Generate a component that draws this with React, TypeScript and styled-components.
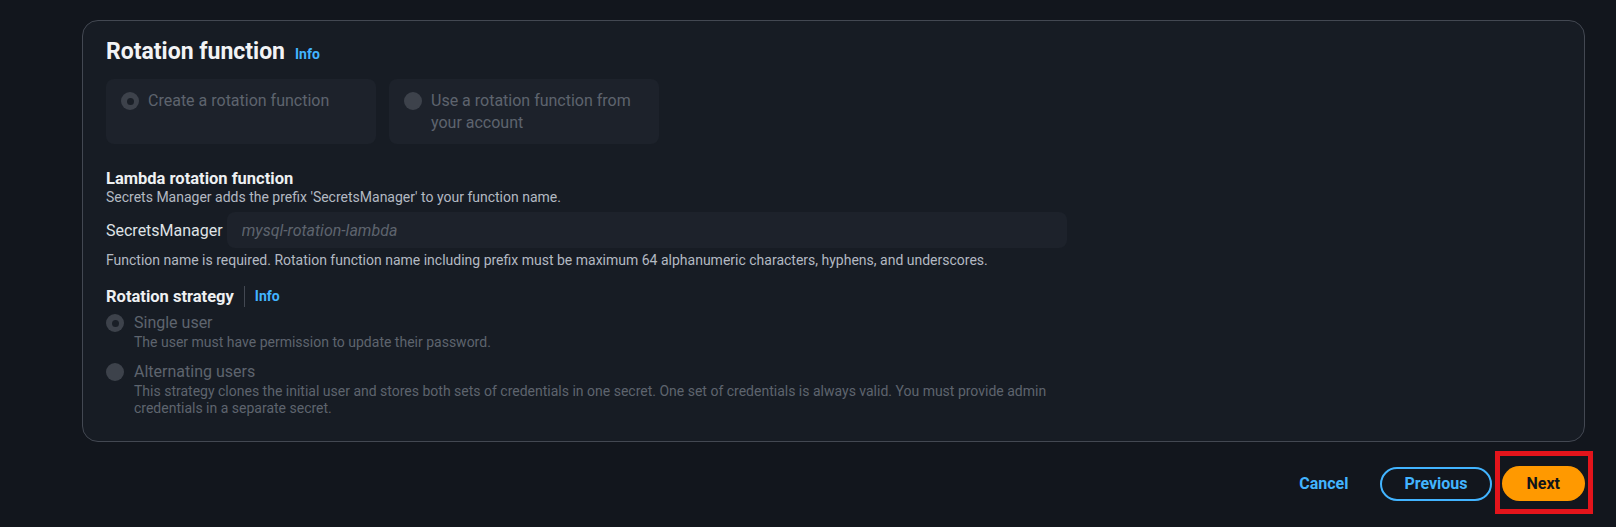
import styled, { createGlobalStyle } from 'styled-components';

const GlobalStyle = createGlobalStyle`
    html, body {
        margin: 0;
        padding: 0;
        background: #12161d;
    }

    body {
        font-family: Roboto, "Liberation Sans", sans-serif;
        color: #e9ebed;
        -webkit-font-smoothing: antialiased;
    }
`;

const StyledPage = styled.div`
    display: flex;
    flex-direction: column;
    gap: 24px;
    padding: 20px 31px 0 82px;
    min-height: 527px;
    box-sizing: border-box;
`;

const StyledCard = styled.section`
    background: #171c24;
    border: 1px solid #434852;
    border-radius: 16px;
    padding: 17px 23px 24px;
`;

const StyledHeader = styled.div`
    display: flex;
    align-items: baseline;
    gap: 10px;
`;

const StyledTitle = styled.h2`
    margin: 0;
    font-size: 23px;
    line-height: 28px;
    font-weight: 700;
    color: #f2f3f5;
`;

const StyledInfo = styled.a<{ $divided?: boolean }>`
    font-size: 14px;
    font-weight: 700;
    color: #42b4ff;
    text-decoration: none;
    padding-left: ${p => (p.$divided ? '10px' : '0')};
    border-left: ${p => (p.$divided ? '1px solid #434852' : 'none')};
    line-height: 21px;
`;

const StyledTiles = styled.div`
    display: grid;
    grid-template-columns: repeat(2, 270px);
    gap: 13px;
    margin-top: 13px;
`;

const StyledTile = styled.div`
    display: flex;
    gap: 9px;
    height: 65px;
    box-sizing: border-box;
    padding: 11px 15px;
    background: #1d222b;
    border-radius: 8px;
`;

const StyledRadio = styled.span<{ $checked?: boolean; $offset?: number }>`
    flex: none;
    width: 18px;
    height: 18px;
    margin-top: ${p => p.$offset ?? 2}px;
    border-radius: 50%;
    background: #3d424b;
    display: flex;
    align-items: center;
    justify-content: center;

    &::after {
        content: '';
        display: ${p => (p.$checked ? 'block' : 'none')};
        width: 7px;
        height: 7px;
        border-radius: 50%;
        background: #1a1f27;
    }
`;

const StyledDisabledLabel = styled.span`
    font-size: 16px;
    line-height: 22px;
    color: #5e646e;
`;

const StyledField = styled.div`
    display: flex;
    flex-direction: column;
    max-width: 961px;
`;

const StyledFieldLabel = styled.div`
    display: flex;
    align-items: center;
    gap: 10px;
    font-size: 16.5px;
    line-height: 21px;
    font-weight: 700;
    color: #eef0f2;
`;

const StyledDescription = styled.div<{ $muted?: boolean }>`
    font-size: 14px;
    line-height: 17px;
    color: ${p => (p.$muted ? '#5e646e' : '#b3b9c2')};
`;

const StyledInputRow = styled.div`
    display: flex;
    align-items: center;
    gap: 4px;
    margin: 6px 0 4px;
`;

const StyledPrefix = styled.span`
    font-size: 16px;
    color: #dfe2e6;
`;

const StyledInput = styled.input`
    flex: 1;
    height: 36px;
    box-sizing: border-box;
    border: none;
    border-radius: 8px;
    background: #1d222b;
    padding: 0 15px;
    font-family: inherit;
    font-size: 16px;
    font-style: italic;
    color: #e9ebed;
    outline: none;

    &::placeholder {
        color: #5e646e;
    }
`;

const StyledLambda = styled(StyledField)`
    margin-top: 24px;
`;

const StyledStrategy = styled(StyledField)`
    margin-top: 17px;
`;

const StyledOption = styled.div`
    display: flex;
    gap: 10px;
    margin-top: 5px;

    & + & {
        margin-top: 10px;
    }
`;

const StyledOptionBody = styled.div`
    display: flex;
    flex-direction: column;
`;

const StyledActions = styled.div`
    display: flex;
    justify-content: flex-end;
    align-items: center;
    gap: 10px;
`;

const StyledButton = styled.button<{ $variant: 'link' | 'normal' | 'primary' }>`
    font-family: inherit;
    font-size: 16px;
    font-weight: 700;
    border-radius: 20px;
    cursor: pointer;
    box-sizing: border-box;
    height: ${p => (p.$variant === 'primary' ? '35px' : '34px')};
    padding: 0 ${p => (p.$variant === 'primary' ? '25px' : '22px')};
    background: ${p => (p.$variant === 'primary' ? '#ff9900' : 'transparent')};
    color: ${p => (p.$variant === 'primary' ? '#0f141a' : '#42b4ff')};
    border: ${p => (p.$variant === 'normal' ? '2px solid #42b4ff' : 'none')};
`;

const StyledHighlight = styled.span`
    position: relative;
    display: inline-flex;

    &::after {
        content: '';
        position: absolute;
        top: -15px;
        bottom: -13px;
        left: -7px;
        right: -8px;
        border: 5px solid #e3141b;
        pointer-events: none;
    }
`;

const App = () => {
    return (
        <>
            <GlobalStyle />
            <StyledPage>
                <StyledCard>
                    <StyledHeader>
                        <StyledTitle>Rotation function</StyledTitle>
                        <StyledInfo>Info</StyledInfo>
                    </StyledHeader>
                    <StyledTiles>
                        <StyledTile>
                            <StyledRadio $checked $offset={2} />
                            <StyledDisabledLabel>Create a rotation function</StyledDisabledLabel>
                        </StyledTile>
                        <StyledTile>
                            <StyledRadio $offset={2} />
                            <StyledDisabledLabel>Use a rotation function from your account</StyledDisabledLabel>
                        </StyledTile>
                    </StyledTiles>

                    <StyledLambda>
                        <StyledFieldLabel>Lambda rotation function</StyledFieldLabel>
                        <StyledDescription>
                            Secrets Manager adds the prefix 'SecretsManager' to your function name.
                        </StyledDescription>
                        <StyledInputRow>
                            <StyledPrefix>SecretsManager</StyledPrefix>
                            <StyledInput placeholder='mysql-rotation-lambda' disabled />
                        </StyledInputRow>
                        <StyledDescription>
                            Function name is required. Rotation function name including prefix must be maximum 64 alphanumeric characters, hyphens, and underscores.
                        </StyledDescription>
                    </StyledLambda>

                    <StyledStrategy>
                        <StyledFieldLabel>
                            Rotation strategy
                            <StyledInfo $divided>Info</StyledInfo>
                        </StyledFieldLabel>
                        <StyledOption>
                            <StyledRadio $checked />
                            <StyledOptionBody>
                                <StyledDisabledLabel>Single user</StyledDisabledLabel>
                                <StyledDescription $muted>
                                    The user must have permission to update their password.
                                </StyledDescription>
                            </StyledOptionBody>
                        </StyledOption>
                        <StyledOption>
                            <StyledRadio />
                            <StyledOptionBody>
                                <StyledDisabledLabel>Alternating users</StyledDisabledLabel>
                                <StyledDescription $muted>
                                    This strategy clones the initial user and stores both sets of credentials in one secret. One set of credentials is always valid. You must provide admin credentials in a separate secret.
                                </StyledDescription>
                            </StyledOptionBody>
                        </StyledOption>
                    </StyledStrategy>
                </StyledCard>

                <StyledActions>
                    <StyledButton $variant='link'>Cancel</StyledButton>
                    <StyledButton $variant='normal'>Previous</StyledButton>
                    <StyledHighlight>
                        <StyledButton $variant='primary'>Next</StyledButton>
                    </StyledHighlight>
                </StyledActions>
            </StyledPage>
        </>
    );
};

export default App;
